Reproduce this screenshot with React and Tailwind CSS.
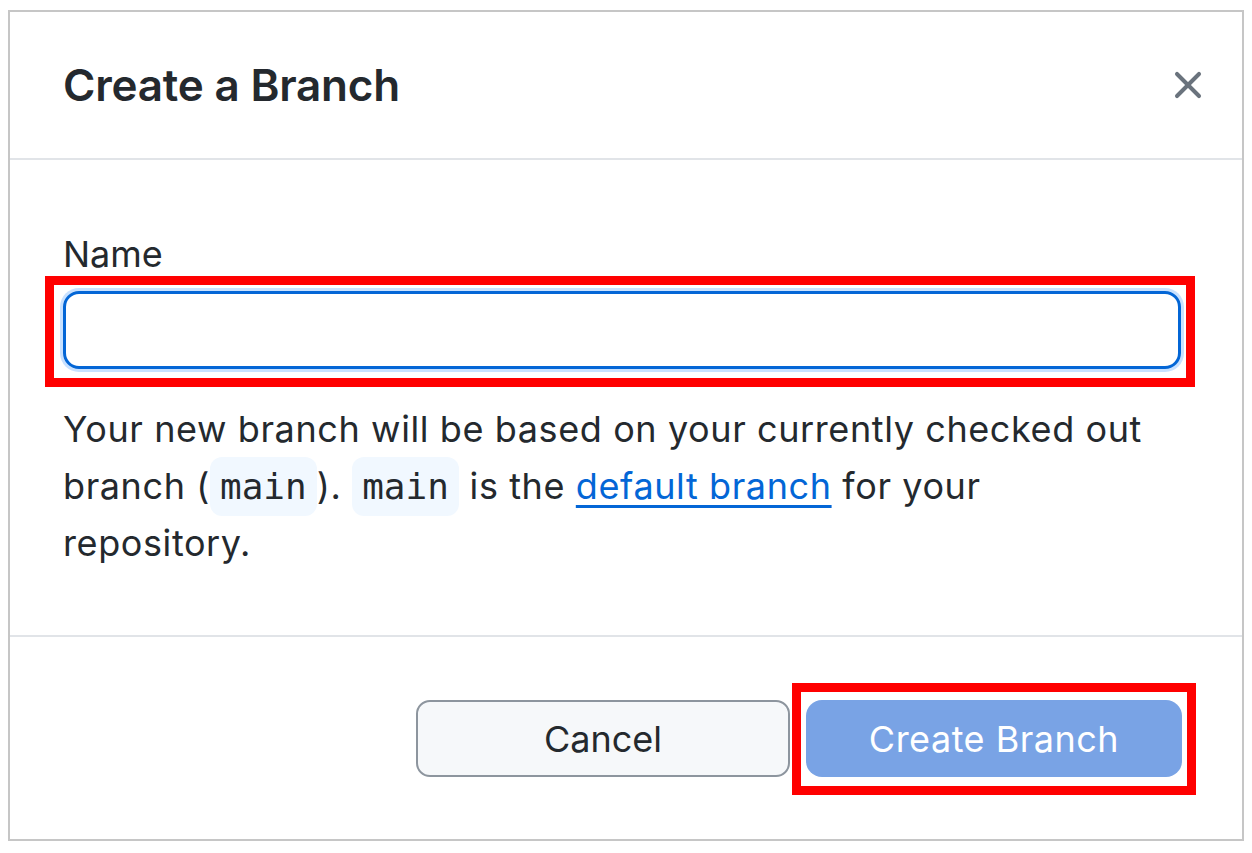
import { X } from "lucide-react";

function Code({ children }) {
  return (
    <code className="rounded-[12px] bg-[#f1f8ff] px-[10px] py-[9px] font-['DejaVu_Sans_Mono',monospace] text-[36px] tracking-normal text-[#24292e]">
      {children}
    </code>
  );
}

export default function App() {
  return (
    <div className="h-[853px] w-full bg-white pl-[8px] pt-[10px] font-['Inter',sans-serif] text-[#24292e]">
      <div className="flex h-[831px] w-[1236px] flex-col border-2 border-[#c6c6c6]">
        {/* header */}
        <div className="flex h-[148px] items-center justify-between border-b-2 border-[#e1e4e8] pl-[53px] pr-[32px]">
          <h1 className="text-[44px] font-semibold tracking-[-0.2px]">Create a Branch</h1>
          <button className="text-[#6a737d]">
            <X size={44} strokeWidth={2.2} />
          </button>
        </div>

        {/* body */}
        <div className="flex-1 px-[53px] pt-[72px]">
          <label className="mb-[15px] block text-[36px] leading-[44px]">Name</label>
          <div className="relative w-[1118px]">
            <input
              type="text"
              autoFocus
              className="block h-[78px] w-full rounded-[16px] border-[3px] border-[#0366d6] px-4 text-[36px] outline-none ring-[3px] ring-[#c8e1ff]"
            />
            <div className="pointer-events-none absolute -bottom-[18px] -left-[18px] -right-[14px] -top-[15px] border-[9px] border-[#ff0000]" />
          </div>
          <p className="mt-[32px] w-[1100px] text-[36px] leading-[57px] tracking-[0.6px]">
            Your new branch will be based on your currently checked out branch (<Code>main</Code>).{" "}
            <Code>main</Code> is the{" "}
            <a href="#" className="text-[#0366d6] underline underline-offset-[6px]">
              default branch
            </a>{" "}
            for your repository.
          </p>
        </div>

        {/* footer */}
        <div className="flex h-[204px] items-start justify-end gap-[16px] border-t-2 border-[#e1e4e8] pr-[60px] pt-[63px]">
          <button className="h-[77px] w-[374px] rounded-[14px] border-2 border-[#8d959e] bg-[#f6f8fa] text-[36px]">
            Cancel
          </button>
          <div className="relative">
            <button
              disabled
              className="h-[77px] w-[376px] rounded-[16px] bg-[#79a3e5] text-[36px] tracking-[0.5px] text-white"
            >
              Create Branch
            </button>
            <div className="pointer-events-none absolute -bottom-[18px] -left-[14px] -right-[14px] -top-[17px] border-[9px] border-[#ff0000]" />
          </div>
        </div>
      </div>
    </div>
  );
}
